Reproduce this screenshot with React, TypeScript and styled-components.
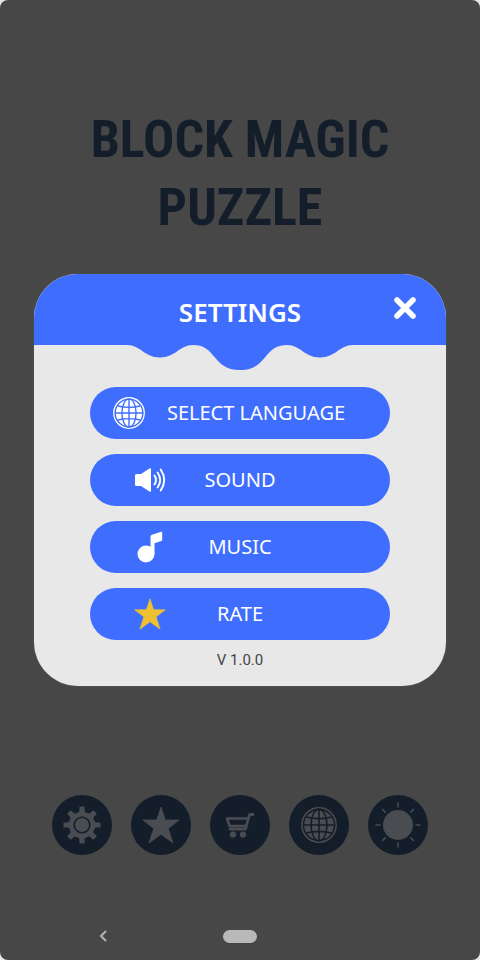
import React from "react";
import styled, { createGlobalStyle } from "styled-components";

const BLUE = "#3f6eff";
const NAVY = "#141e2b";
const SHADE = "#474747";

const GlobalStyle = createGlobalStyle`
  * { box-sizing: border-box; }
  body { margin: 0; background: #e6e9e8; }
  button { border: 0; padding: 0; font: inherit; cursor: pointer; }
  svg { display: block; }
`;

const Screen = styled.div`
  min-height: 100vh;
  display: flex;
  flex-direction: column;
  align-items: center;
  padding: 106px 24px 0;
  border-radius: 8px;
  background: ${SHADE};
  font-family: "Noto Sans", "Open Sans", sans-serif;
`;

const GameTitle = styled.h1`
  margin: 0;
  text-align: center;
  color: ${NAVY};
  font: bold 52px/68px "Roboto Condensed", "DejaVu Sans Condensed", Roboto, sans-serif;
`;

const Dialog = styled.section`
  width: 100%;
  max-width: 412px;
  margin: 32px 10px 0;
  border-radius: 44px;
  overflow: hidden;
  background: #e8e8e8;
  box-shadow: 0 0 1px #8a8a8a;
`;

const DialogHeader = styled.header`
  height: 71px;
  display: grid;
  grid-template-columns: 1fr auto 1fr;
  align-items: center;
  padding: 4px 28px 0;
  background: ${BLUE};
`;

const DialogTitle = styled.h2`
  grid-column: 2;
  margin: 0;
  color: #fff;
  font-size: 26px;
  line-height: 36px;
  font-weight: 600;
`;

const CloseButton = styled.button`
  justify-self: end;
  margin-bottom: 8px;
  background: none;
`;

const Drip = styled.svg`
  margin: -1px auto 0;
  width: 226px;
  height: 27px;
`;

const Options = styled.div`
  display: flex;
  flex-direction: column;
  gap: 15px;
  width: 300px;
  margin: 16px auto 0;
`;

const Option = styled.button<{ $wide?: boolean }>`
  height: 52px;
  display: grid;
  grid-template-columns: ${(p) => (p.$wide ? "32px 1fr" : "32px 1fr 32px")};
  align-items: center;
  padding: 0 ${(p) => (p.$wide ? 23 : 44)}px;
  border-radius: 26px;
  background: ${BLUE};
  color: #fff;
  font-size: 20px;
  line-height: 28px;
  text-align: center;
  white-space: nowrap;
`;

const Version = styled.p`
  margin: 0;
  padding: 10px 0 16px;
  text-align: center;
  color: #444;
  font: 15px/20px Roboto, sans-serif;
`;

const Toolbar = styled.nav`
  display: flex;
  gap: 19px;
  margin-top: 109px;
`;

const RoundButton = styled.button`
  width: 60px;
  height: 60px;
  display: grid;
  place-items: center;
  border-radius: 50%;
  background: ${NAVY};
  color: #494c50;
`;

const SystemBar = styled.footer`
  width: 100%;
  display: grid;
  grid-template-columns: 1fr auto 1fr;
  align-items: center;
  margin-top: auto;
  padding: 0 73px 17px;
`;

const BackButton = styled.button`
  justify-self: start;
  background: none;
  color: #b4b4b4;
`;

const HomeButton = styled.button`
  width: 34px;
  height: 13px;
  border-radius: 7px;
  background: #b9b9b9;
`;

const Globe = ({ size, line }: { size: number; line: string }) => (
  <svg width={size} height={size} viewBox="0 0 34 34" fill="none">
    <circle cx="17" cy="17" r="16.2" stroke="currentColor" strokeWidth="1.4" />
    <circle cx="17" cy="17" r="14" fill="currentColor" />
    <g stroke={line} strokeWidth="1.5">
      <path d="M17 2v30M2 17h30M5 9.5q12 3 24 0M5 24.5q12-3 24 0" />
      <ellipse cx="17" cy="17" rx="7.5" ry="15" />
    </g>
  </svg>
);

const Star = ({ size, color }: { size: number; color: string }) => (
  <svg width={size} height={size} viewBox="0 0 38 38">
    <path
      d="M19 1l4.3 13H37.2L26.2 22.4 31 37 19 28.3 7 37l4.8-14.6L.8 14h13.9z"
      fill={color}
      stroke={color}
      strokeWidth=".8"
      strokeLinejoin="round"
    />
  </svg>
);

const Speaker = () => (
  <svg width="32" height="26" viewBox="0 0 32 26">
    <path d="M1 8.5q0-1.5 1.5-1.5H7L15.5 1.5q1.5-1 1.5 1v21q0 2-1.5 1L7 19H2.5Q1 19 1 17.5z" fill="#fff" />
    <g fill="none" stroke="#fff" strokeWidth="1.9" strokeLinecap="round">
      <path d="M20.5 8.5q3 4.5 0 9M23.6 5.5q5.2 7.5 0 15M26.7 2.500q7 10.5 0 21" />
    </g>
  </svg>
);

const Note = () => (
  <svg width="32" height="32" viewBox="0 0 32 32" fill="#fff">
    <circle cx="12" cy="23" r="8.5" />
    <path d="M16.5 6Q16.5 4.3 18 3.8L27.2.8q1-.3 1 .7V9q0 .8-.8 1.1L20.5 12.3V23h-4z" />
  </svg>
);

const Gear = () => (
  <svg width="38" height="38" viewBox="-19 -19 38 38">
    <g fill="currentColor">
      <circle r="13.2" />
      {[0, 45, 90, 135, 180, 225, 270, 315].map((a) => (
        <path key={a} d="M-4-12Q-2.6-13-2.6-15v-2.6q0-.9.9-.9h3.4q.9 0 .9.9V-15q0 2 1.4 3z" transform={`rotate(${a})`} />
      ))}
    </g>
    <circle r="7.8" fill="none" stroke={NAVY} strokeWidth="1.6" />
  </svg>
);

const Cart = () => (
  <svg width="30" height="26" viewBox="0 0 30 26" fill="none" stroke="currentColor" strokeLinejoin="round" strokeLinecap="round">
    <path d="M28 2.5h-3.500L20.500 17H5" strokeWidth="2.8" />
    <path d="M23 6.5H2l2.600 7.500H21" strokeWidth="2.6" />
    <circle cx="8" cy="22.5" r="3.1" fill="currentColor" stroke="none" />
    <circle cx="18" cy="22.5" r="3.1" fill="currentColor" stroke="none" />
  </svg>
);

const Sun = () => (
  <svg width="46" height="46" viewBox="-23 -23 46 46">
    <circle r="15" fill="currentColor" />
    {[0, 45, 90, 135, 180, 225, 270, 315].map((a) => (
      <path key={a} d="M0-17.5v-5" stroke="currentColor" strokeWidth="1.5" transform={`rotate(${a})`} />
    ))}
  </svg>
);

export default function App() {
  return (
    <>
      <GlobalStyle />
      <Screen>
        <GameTitle>
          BLOCK MAGIC
          <br />
          PUZZLE
        </GameTitle>
        <Dialog role="dialog" aria-labelledby="settings-title">
          <DialogHeader>
            <DialogTitle id="settings-title">SETTINGS</DialogTitle>
            <CloseButton aria-label="Close">
              <svg width="26" height="26" viewBox="0 0 26 26">
                <path d="M5 5l16 16M21 5L5 21" stroke="#fff" strokeWidth="5.5" strokeLinecap="round" />
              </svg>
            </CloseButton>
          </DialogHeader>
          <Drip viewBox="0 0 226 27" aria-hidden="true">
            <path
              d="M0 0V1C14 1 17 13.500 33 13.500S52 1 66 1C90 1 85 26 113 26S136 1 160 1C174 1 177 13.500 193 13.500S212 1 226 1V0z"
              fill={BLUE}
            />
          </Drip>
          <Options>
            <Option $wide>
              <Globe size={32} line={BLUE} />
              <span>SELECT LANGUAGE</span>
            </Option>
            <Option>
              <Speaker />
              <span>SOUND</span>
            </Option>
            <Option>
              <Note />
              <span>MUSIC</span>
            </Option>
            <Option>
              <Star size={32} color="#efc02f" />
              <span>RATE</span>
            </Option>
          </Options>
          <Version>V 1.0.0</Version>
        </Dialog>
        <Toolbar aria-label="Game menu">
          <RoundButton aria-label="Settings"><Gear /></RoundButton>
          <RoundButton aria-label="Rate"><Star size={38} color="currentColor" /></RoundButton>
          <RoundButton aria-label="Shop"><Cart /></RoundButton>
          <RoundButton aria-label="Language"><Globe size={36} line={NAVY} /></RoundButton>
          <RoundButton aria-label="Theme"><Sun /></RoundButton>
        </Toolbar>
        <SystemBar>
          <BackButton aria-label="Back">
            <svg width="12" height="14" viewBox="0 0 12 14" fill="none" stroke="currentColor" strokeWidth="2">
              <path d="M9 2L4 7l5 5" />
            </svg>
          </BackButton>
          <HomeButton aria-label="Home" />
        </SystemBar>
      </Screen>
    </>
  );
}
